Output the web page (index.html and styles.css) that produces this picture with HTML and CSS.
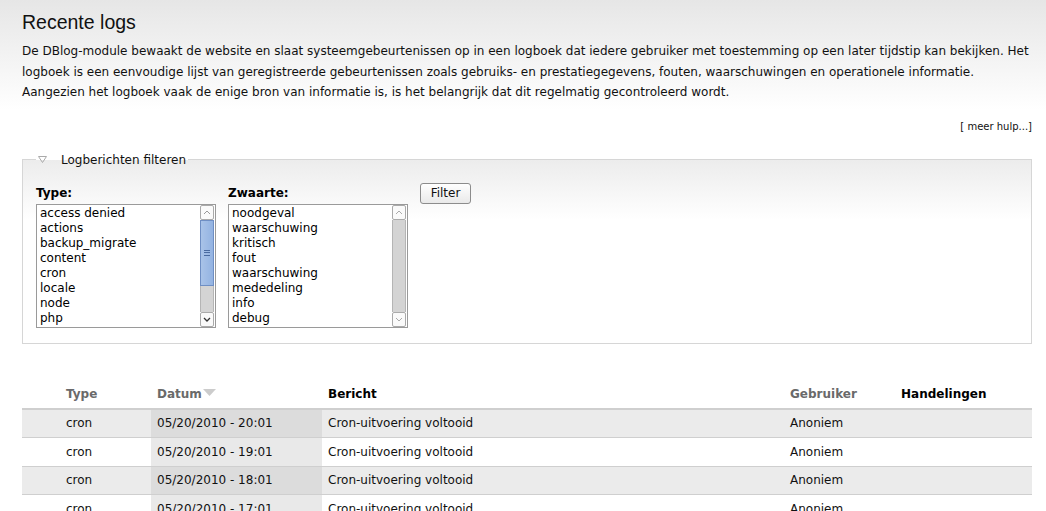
FILE: index.html
```html
<!DOCTYPE html>
<html lang="nl">
<head>
<meta charset="utf-8">
<title>Recente logs</title>
<link rel="stylesheet" href="styles.css">
</head>
<body>
<div class="page">
  <h1 class="title">Recente logs</h1>
  <p class="intro">De DBlog-module bewaakt de website en slaat systeemgebeurtenissen op in een logboek dat iedere gebruiker met toestemming op een later tijdstip kan bekijken. Het logboek is een eenvoudige lijst van geregistreerde gebeurtenissen zoals gebruiks- en prestatiegegevens, fouten, waarschuwingen en operationele informatie. Aangezien het logboek vaak de enige bron van informatie is, is het belangrijk dat dit regelmatig gecontroleerd wordt.</p>
  <div class="more-help">[ meer hulp...]</div>

  <fieldset class="filter">
    <legend class="legend"><span class="tri"><svg width="9" height="7" viewBox="0 0 9 7"><path d="M0.5 0.5 H8.5 L4.5 6.5 Z" fill="none" stroke="#aaa" stroke-width="1"/></svg></span>Logberichten filteren</legend>
    <div class="filter-row">
      <div class="field">
        <div class="label">Type:</div>
        <div class="listbox">
          <ul class="options">
            <li>access denied</li>
            <li>actions</li>
            <li>backup_migrate</li>
            <li>content</li>
            <li>cron</li>
            <li>locale</li>
            <li>node</li>
            <li>php</li>
          </ul>
          <div class="sb">
            <div class="sb-btn"><svg width="8" height="5" viewBox="0 0 8 5"><path d="M1 4 L4 1 L7 4" fill="none" stroke="#999" stroke-width="1"/></svg></div>
            <div class="sb-thumb"><span class="grip"></span></div>
            <div class="sb-track"></div>
            <div class="sb-btn"><svg width="8" height="5" viewBox="0 0 8 5"><path d="M1 1 L4 4 L7 1" fill="none" stroke="#333" stroke-width="1.3"/></svg></div>
          </div>
        </div>
      </div>
      <div class="field">
        <div class="label">Zwaarte:</div>
        <div class="listbox">
          <ul class="options">
            <li>noodgeval</li>
            <li>waarschuwing</li>
            <li>kritisch</li>
            <li>fout</li>
            <li>waarschuwing</li>
            <li>mededeling</li>
            <li>info</li>
            <li>debug</li>
          </ul>
          <div class="sb">
            <div class="sb-btn"><svg width="8" height="5" viewBox="0 0 8 5"><path d="M1 4 L4 1 L7 4" fill="none" stroke="#aaa" stroke-width="1"/></svg></div>
            <div class="sb-track full"></div>
            <div class="sb-btn"><svg width="8" height="5" viewBox="0 0 8 5"><path d="M1 1 L4 4 L7 1" fill="none" stroke="#aaa" stroke-width="1"/></svg></div>
          </div>
        </div>
      </div>
      <button class="btn" type="button">Filter</button>
    </div>
  </fieldset>

  <table class="logs">
    <colgroup>
      <col class="c-icon"><col class="c-type"><col class="c-date"><col class="c-msg"><col class="c-user"><col class="c-ops">
    </colgroup>
    <thead>
      <tr>
        <th></th>
        <th class="sortable">Type</th>
        <th class="sortable">Datum<span class="arrow"><svg width="13" height="7" viewBox="0 0 13 7"><path d="M0 0 H13 L6.5 7 Z" fill="#ccc"/></svg></span></th>
        <th>Bericht</th>
        <th class="sortable">Gebruiker</th>
        <th>Handelingen</th>
      </tr>
    </thead>
    <tbody>
      <tr class="odd"><td></td><td>cron</td><td class="active">05/20/2010 - 20:01</td><td>Cron-uitvoering voltooid</td><td>Anoniem</td><td></td></tr>
      <tr class="even"><td></td><td>cron</td><td class="active">05/20/2010 - 19:01</td><td>Cron-uitvoering voltooid</td><td>Anoniem</td><td></td></tr>
      <tr class="odd"><td></td><td>cron</td><td class="active">05/20/2010 - 18:01</td><td>Cron-uitvoering voltooid</td><td>Anoniem</td><td></td></tr>
      <tr class="even"><td></td><td>cron</td><td class="active">05/20/2010 - 17:01</td><td>Cron-uitvoering voltooid</td><td>Anoniem</td><td></td></tr>
    </tbody>
  </table>
</div>
</body>
</html>
```

FILE: styles.css
```css
html, body {
  margin: 0;
  padding: 0;
}
body {
  background: #fff linear-gradient(to bottom, #e6e6e6 0px, #ffffff 110px) no-repeat;
  font-family: "DejaVu Sans", sans-serif;
  font-size: 12px;
  color: #000;
  overflow: hidden;
}
.page {
  padding: 0 14px 0 22px;
}
.title {
  margin: 0;
  padding-top: 10px;
  font-family: "Liberation Sans", Arial, sans-serif;
  font-weight: normal;
  font-size: 19.5px;
  line-height: 24px;
  color: #111;
}
.intro {
  margin: 7px 0 0 0;
  line-height: 20.5px;
  color: #111;
}
.more-help {
  text-align: right;
  font-size: 10px;
  margin-top: 17px;
  line-height: 14px;
  color: #111;
}
.filter {
  margin: 19px 0 0 0;
  padding: 16px 13px 15px 13px;
  border: 1px solid #d6d6d6;
  background: linear-gradient(to bottom, #ececec 0px, #ffffff 60px);
  min-width: 0;
}
.legend {
  padding: 0 2px 0 2px;
  margin-left: 0;
  line-height: 14px;
  color: #111;
}
.tri {
  display: inline-block;
  width: 23px;
  vertical-align: 1px;
}
.tri svg {
  display: block;
}
.filter-row {
  display: flex;
  gap: 12px;
  align-items: flex-start;
}
.field {
  width: 180px;
}
.label {
  font-weight: bold;
  line-height: 14px;
  padding-top: 3px;
  margin-bottom: 4px;
}
.listbox {
  display: flex;
  border: 1px solid #9a9a9a;
  background: #fff;
  height: 122px;
}
.options {
  flex: 1;
  list-style: none;
  margin: 0;
  padding: 1px 0 0 3px;
  overflow: hidden;
}
.options li {
  line-height: 15px;
  height: 15px;
  white-space: nowrap;
}
.sb {
  width: 14px;
  margin: 0 1px 0 0;
  display: flex;
  flex-direction: column;
}
.sb-btn {
  height: 13px;
  border: 1px solid #aaa;
  border-radius: 2px;
  background: #fafafa;
  display: flex;
  align-items: center;
  justify-content: center;
  box-sizing: content-box;
}
.sb-btn svg { display: block; }
.sb-thumb {
  height: 64px;
  background: linear-gradient(to right, #a9c3e8, #93b3e2);
  border: 1px solid #6f8fc4;
  display: flex;
  align-items: center;
  justify-content: center;
}
.grip {
  width: 6px;
  height: 6px;
  border-top: 1px solid #4a6aa0;
  border-bottom: 1px solid #4a6aa0;
  box-sizing: border-box;
}
.grip::after {
  content: "";
  display: block;
  margin-top: 1.5px;
  border-top: 1px solid #4a6aa0;
}
.sb-track {
  flex: 1;
  background: #d4d4d4;
  border-left: 1px solid #b5b5b5;
  border-right: 1px solid #b5b5b5;
}
.btn {
  margin-top: 0;
  width: 51px;
  height: 21px;
  padding: 0;
  font-family: "DejaVu Sans", sans-serif;
  font-size: 12px;
  color: #111;
  border: 1px solid #8c8c8c;
  border-radius: 3px;
  background: linear-gradient(to bottom, #ffffff, #e9e9e9);
}
.logs {
  margin-top: 36px;
  width: 100%;
  border-collapse: collapse;
  table-layout: fixed;
}
.c-icon { width: 38px; }
.c-type { width: 91px; }
.c-date { width: 171px; }
.c-msg { width: 462px; }
.c-user { width: 111px; }
.c-ops { width: auto; }
.logs th {
  text-align: left;
  font-weight: bold;
  padding: 7px 6px 7px 6px;
  line-height: 14px;
  border-bottom: 2px solid #cfcfcf;
  color: #000;
}
.logs th.sortable {
  color: #6a6a6a;
}
.arrow {
  display: inline-block;
  margin-left: 1px;
  vertical-align: 2px;
}
.arrow svg { display: block; }
.logs td {
  padding: 0 6px;
  height: 27.5px;
  line-height: 14px;
  border-bottom: 1px solid #cfcfcf;
  color: #111;
  white-space: nowrap;
}
.logs tr.odd td { background: #ebebeb; }
.logs tr.even td { background: #ffffff; }
.logs tr.odd td.active { background: #dcdcdc; }
.logs tr.even td.active { background: #e9e9e9; }
```
